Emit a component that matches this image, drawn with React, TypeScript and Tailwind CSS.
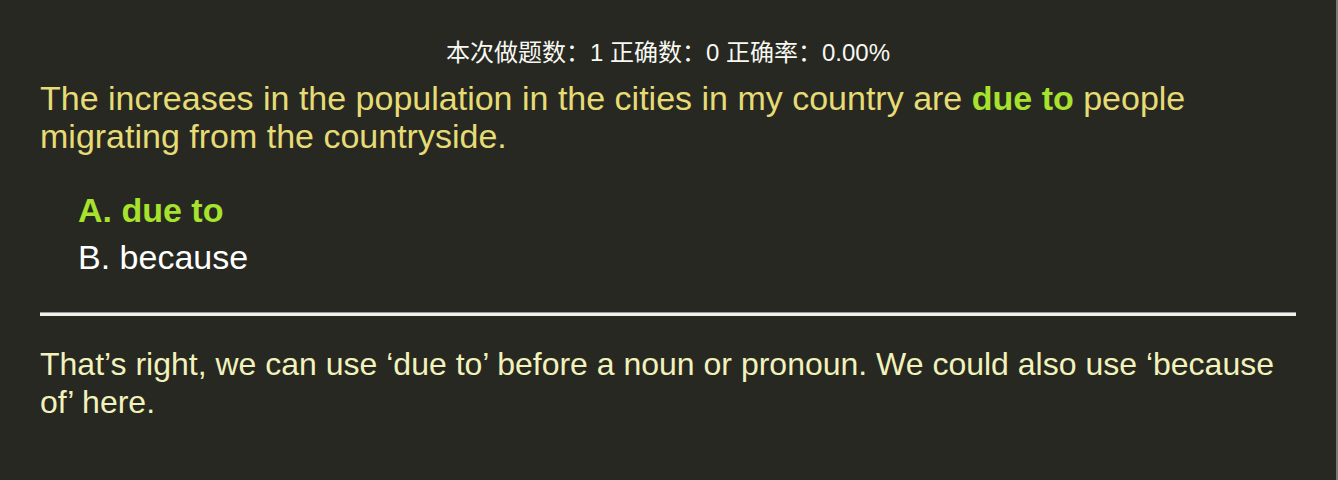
import React from 'react';

const sans = "font-['Liberation_Sans',Arial,'Noto_Sans_CJK_SC',sans-serif]";

const options = [
  { key: 'A', text: 'due to', correct: true },
  { key: 'B', text: 'because', correct: false },
];

const App: React.FC = () => {
  return (
    <div className={`flex min-h-[480px] bg-[#272822] ${sans}`}>
      <div className="flex-1 px-10 pt-[36px] pb-10">
        {/* Stats */}
        <div className="h-[34px] text-center text-[24px] leading-[34px] text-[#f8f8f2]">
          本次做题数：1 正确数：0 正确率：0.00%
        </div>

        {/* Question */}
        <p className="mt-[9px] text-[34px] leading-[38px] text-[#e6db74]">
          The increases in the population in the cities in my country are{' '}
          <strong className="font-bold text-[#a6e22e]">due to</strong> people migrating from the countryside.
        </p>

        {/* Options */}
        <ul className="mt-[36px] space-y-[9px] pl-[38px] text-[34px] leading-[38px]">
          {options.map((o) => (
            <li
              key={o.key}
              className={o.correct ? 'font-bold text-[#a6e22e]' : 'text-white'}
            >
              {o.key}. {o.text}
            </li>
          ))}
        </ul>

        <div className="mt-[36px] h-[4px] border-t border-[#9a9a9a] bg-[#f0f0f0]" />

        {/* Feedback */}
        <p className="mt-[29px] text-[32px] leading-[38px] text-[#f2f2bc]">
          That’s right, we can use ‘due to’ before a noun or pronoun. We could also use ‘because of’ here.
        </p>
      </div>
      <div className="w-[2px] bg-[#7a7a7a]" />
    </div>
  );
};

export default App;
